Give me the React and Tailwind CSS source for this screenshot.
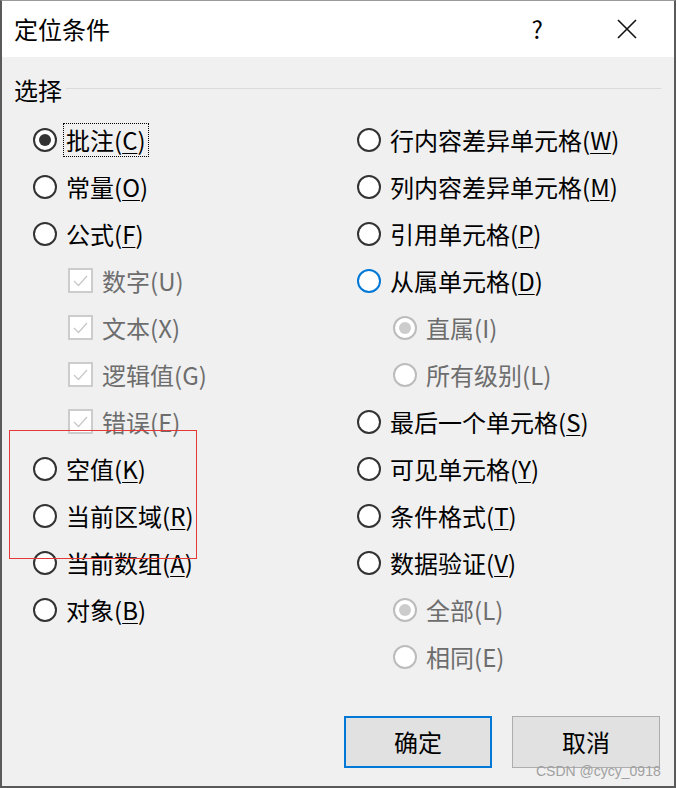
import React from "react";

const font = { fontFamily: '"Noto Sans CJK SC", "Noto Sans", sans-serif' };

function Radio({ checked, disabled, blue }) {
  const ring = disabled
    ? "border-[#bcbcbc]"
    : blue
    ? "border-[#0078d7]"
    : "border-[#333333]";
  return (
    <span
      className={`flex h-[24px] w-[24px] shrink-0 items-center justify-center rounded-full border-2 bg-white ${ring}`}
    >
      {checked && (
        <span
          className={`h-[12px] w-[12px] rounded-full ${
            disabled ? "bg-[#cccccc]" : "bg-[#333333]"
          }`}
        />
      )}
    </span>
  );
}

function Check() {
  return (
    <span className="flex h-[25px] w-[25px] shrink-0 items-center justify-center border-2 border-[#cccccc] bg-white">
      <svg width="17" height="17" viewBox="0 0 17 17" fill="none">
        <path d="M2 9l4.5 4.5L15 4" stroke="#c8c8c8" strokeWidth="1.3" />
      </svg>
    </span>
  );
}

function Label({ text, keyChar, disabled, focus }) {
  return (
    <span
      className={`whitespace-nowrap border px-[2px] text-[24px] leading-[32px] ${
        focus ? "border-dotted border-black" : "border-transparent"
      } ${disabled ? "text-[#6d6d6d]" : "text-black"}`}
    >
      {text}(
      {disabled ? keyChar : <u className="underline-offset-[3px] decoration-1">{keyChar}</u>})
    </span>
  );
}

function Row({ item }) {
  const indent = item.sub ? (item.check ? "pl-[35px]" : "pl-[36px]") : "";
  return (
    <div className={`flex h-[47px] items-center gap-[6px] ${indent}`}>
      {item.check ? (
        <Check />
      ) : (
        <Radio checked={item.checked} disabled={item.disabled} blue={item.blue} />
      )}
      <Label
        text={item.text}
        keyChar={item.k}
        disabled={item.disabled}
        focus={item.focus}
      />
    </div>
  );
}

const left = [
  { text: "批注", k: "C", checked: true, focus: true },
  { text: "常量", k: "O" },
  { text: "公式", k: "F" },
  { text: "数字", k: "U", sub: true, check: true, disabled: true },
  { text: "文本", k: "X", sub: true, check: true, disabled: true },
  { text: "逻辑值", k: "G", sub: true, check: true, disabled: true },
  { text: "错误", k: "E", sub: true, check: true, disabled: true },
  { text: "空值", k: "K" },
  { text: "当前区域", k: "R" },
  { text: "当前数组", k: "A" },
  { text: "对象", k: "B" },
];

const right = [
  { text: "行内容差异单元格", k: "W" },
  { text: "列内容差异单元格", k: "M" },
  { text: "引用单元格", k: "P" },
  { text: "从属单元格", k: "D", blue: true },
  { text: "直属", k: "I", sub: true, disabled: true, checked: true },
  { text: "所有级别", k: "L", sub: true, disabled: true },
  { text: "最后一个单元格", k: "S" },
  { text: "可见单元格", k: "Y" },
  { text: "条件格式", k: "T" },
  { text: "数据验证", k: "V" },
  { text: "全部", k: "L", sub: true, disabled: true, checked: true },
  { text: "相同", k: "E", sub: true, disabled: true },
];

export default function App() {
  return (
    <div
      className="relative flex h-[788px] w-[676px] flex-col border-x-2 border-b-2 border-t border-x-[#5a5a5a] border-b-[#5a5a5a] border-t-[#9a9a9a] bg-[#f0f0f0]"
      style={font}
    >
      {/* title bar */}
      <div className="flex h-[56px] shrink-0 items-center bg-white pl-[12px] pr-[37px]">
        <span className="text-[24px] leading-[32px] text-black">定位条件</span>
        <span className="ml-auto text-[24px] leading-[32px] text-black">?</span>
        <svg className="ml-[74px]" width="20" height="20" viewBox="0 0 20 20">
          <path d="M1 1L19 19M19 1L1 19" stroke="#111" strokeWidth="1.6" />
        </svg>
      </div>

      {/* group */}
      <div className="flex flex-1 flex-col">
        <div className="mt-[17px] flex items-center gap-[4px] pl-[12px] pr-[13px]">
          <span className="text-[24px] leading-[32px] text-black">选择</span>
          <span className="mt-[-4px] h-px flex-1 bg-[#dadada]" />
        </div>

        <div className="mt-[10px] grid grid-cols-[324px_1fr] pl-[31px]">
          <div className="flex flex-col">
            {left.map((it) => (
              <Row key={it.text} item={it} />
            ))}
          </div>
          <div className="flex flex-col">
            {right.map((it) => (
              <Row key={it.text} item={it} />
            ))}
          </div>
        </div>

        <div className="mt-[36px] flex gap-[20px] pl-[342px]">
          <button className="h-[52px] w-[148px] border-2 border-[#0078d7] bg-[#e1e1e1] text-[24px] text-black">
            确定
          </button>
          <button className="h-[52px] w-[148px] border border-[#adadad] bg-[#e1e1e1] text-[24px] text-black">
            取消
          </button>
        </div>
      </div>

      {/* annotation box */}
      <div className="pointer-events-none absolute left-[7px] top-[429px] h-[129px] w-[188px] border border-[#e53935]" />

      {/* watermark */}
      <span
        className="pointer-events-none absolute left-[534px] top-[762px] text-[14px] leading-[16px] text-[#a0a0a0]"
        style={{ fontFamily: '"Liberation Sans", Arial, sans-serif' }}
      >
        CSDN @cycy_0918
      </span>
    </div>
  );
}
